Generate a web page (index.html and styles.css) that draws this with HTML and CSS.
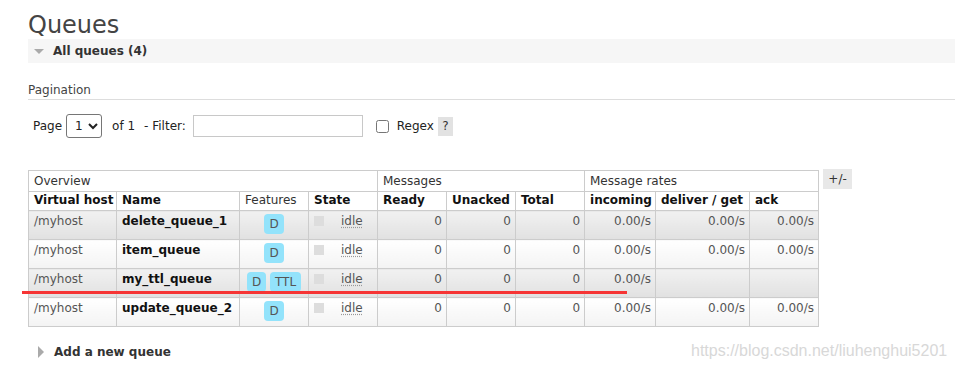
FILE: index.html
```html
<!DOCTYPE html>
<html>
<head>
<meta charset="utf-8">
<title>Queues</title>
<link rel="stylesheet" href="styles.css">
</head>
<body>
<div class="page">
  <h1 class="title">Queues</h1>
  <div class="section-head"><span class="tri-down"></span><span class="section-title">All queues (4)</span></div>
  <div class="pagination">
    <h3 class="pag-label">Pagination</h3>
    <div class="pag-row">
      <span>Page</span>
      <select class="page-select"><option>1</option></select>
      <span class="of">of 1</span>
      <span class="filter-label">- Filter:</span>
      <input class="filter" type="text">
      <input class="regex-check" type="checkbox">
      <span class="regex">Regex</span>
      <span class="help">?</span>
    </div>
  </div>
  <div class="table-wrap">
    <table class="list">
      <colgroup>
        <col class="c-vhost"><col class="c-name"><col class="c-feat"><col class="c-state">
        <col class="c-num"><col class="c-num"><col class="c-num">
        <col class="c-in"><col class="c-del"><col class="c-ack">
      </colgroup>
      <thead>
        <tr class="group">
          <th colspan="4">Overview</th>
          <th colspan="3">Messages</th>
          <th colspan="3">Message rates</th>
        </tr>
        <tr class="cols">
          <th>Virtual host</th><th>Name</th><th class="plain">Features</th><th>State</th>
          <th>Ready</th><th>Unacked</th><th>Total</th>
          <th>incoming</th><th>deliver / get</th><th>ack</th>
        </tr>
      </thead>
      <tbody>
        <tr class="alt1">
          <td class="vhost">/myhost</td><td class="name">delete_queue_1</td>
          <td class="features"><span class="badge">D</span></td>
          <td><div class="state"><span class="dot"></span><span class="idle">idle</span></div></td>
          <td class="num">0</td><td class="num">0</td><td class="num">0</td>
          <td class="num">0.00/s</td><td class="num">0.00/s</td><td class="num">0.00/s</td>
        </tr>
        <tr class="alt2">
          <td class="vhost">/myhost</td><td class="name">item_queue</td>
          <td class="features"><span class="badge">D</span></td>
          <td><div class="state"><span class="dot"></span><span class="idle">idle</span></div></td>
          <td class="num">0</td><td class="num">0</td><td class="num">0</td>
          <td class="num">0.00/s</td><td class="num">0.00/s</td><td class="num">0.00/s</td>
        </tr>
        <tr class="alt1">
          <td class="vhost">/myhost</td><td class="name">my_ttl_queue</td>
          <td class="features"><span class="badge">D</span> <span class="badge">TTL</span></td>
          <td><div class="state"><span class="dot"></span><span class="idle">idle</span></div></td>
          <td class="num">0</td><td class="num">0</td><td class="num">0</td>
          <td class="num">0.00/s</td><td class="num"></td><td class="num"></td>
        </tr>
        <tr class="alt2">
          <td class="vhost">/myhost</td><td class="name">update_queue_2</td>
          <td class="features"><span class="badge">D</span></td>
          <td><div class="state"><span class="dot"></span><span class="idle">idle</span></div></td>
          <td class="num">0</td><td class="num">0</td><td class="num">0</td>
          <td class="num">0.00/s</td><td class="num">0.00/s</td><td class="num">0.00/s</td>
        </tr>
      </tbody>
    </table>
    <span class="toggle">+/-</span>
  </div>
  <div class="add-queue"><span class="tri-right"></span><span class="add-title">Add a new queue</span></div>
  <div class="annotation"></div>
  <div class="watermark">https://blog.csdn.net/liuhenghui5201</div>
</div>
</body>
</html>
```
FILE: styles.css
```css
* { box-sizing: border-box; }
body {
  margin: 0;
  background: #fff;
  font-family: "DejaVu Sans", Verdana, sans-serif;
  font-size: 12px;
  line-height: 14px;
  color: #444;
}
.page {
  position: relative;
  padding-left: 28px;
  min-height: 366px;
  overflow: hidden;
}
.title {
  margin: 11px 0 0;
  font-size: 24px;
  line-height: 28px;
  font-weight: normal;
  color: #444;
}
.section-head {
  display: flex;
  align-items: center;
  height: 24px;
  background: #f6f6f6;
  font-weight: bold;
  color: #333;
}
.tri-down {
  margin-left: 6px;
  width: 0;
  height: 0;
  border-left: 5px solid transparent;
  border-right: 5px solid transparent;
  border-top: 5px solid #aaa;
}
.section-title { margin-left: 9px; }
.pagination { margin-top: 20px; }
.pag-label {
  margin: 0;
  font-size: 12px;
  line-height: 14px;
  font-weight: normal;
  padding-bottom: 2px;
  border-bottom: 1px solid #ddd;
  color: #444;
}
.pag-row {
  display: flex;
  align-items: center;
  height: 24px;
  margin-top: 14px;
  padding-left: 5px;
  color: #222;
}
.page-select {
  margin-left: 4px;
  width: 36px;
  height: 24px;
  padding: 0 0 0 4px;
  border: 1px solid #767676;
  border-radius: 3px;
  background: #fff;
  color: #222;
  font: 12px "DejaVu Sans", Verdana, sans-serif;
}
.of { margin-left: 10px; }
.filter-label { margin-left: 9px; }
.filter {
  margin: 0 0 0 7px;
  width: 170px;
  height: 22px;
  border: 1px solid #c8c8c8;
  padding: 0 3px;
  font: 12px "DejaVu Sans", Verdana, sans-serif;
}
.regex-check {
  margin: 0 0 0 13px;
  width: 13px;
  height: 13px;
}
.regex { margin-left: 8px; }
.help {
  margin-left: 4px;
  width: 15px;
  height: 19px;
  background: #e2e2e2;
  display: flex;
  align-items: center;
  justify-content: center;
  color: #333;
}
.table-wrap {
  display: flex;
  align-items: flex-start;
  gap: 4px;
  margin-top: 32px;
}
.list {
  border-collapse: collapse;
  table-layout: fixed;
  width: 791px;
}
.c-vhost { width: 88px; }
.c-name { width: 123px; }
.c-feat { width: 69px; }
.c-state { width: 69px; }
.c-num { width: 69px; }
.c-in { width: 71px; }
.c-del { width: 94px; }
.c-ack { width: 69px; }
.list th, .list td {
  border: 1px solid #ccc;
  text-align: left;
  vertical-align: top;
  white-space: nowrap;
  overflow: hidden;
}
.group th {
  padding: 3px 5px;
  font-weight: normal;
  color: #333;
  background: #fff;
}
.cols th {
  padding: 1px 5px 3px;
  font-weight: bold;
  color: #111;
  background: #fff;
}
.cols th.plain { font-weight: normal; color: #333; }
.list td { padding: 3px 5px 5px; }
.alt1 td { background: linear-gradient(#f1f1f1, #e1e1e1); }
.alt2 td { background: linear-gradient(#fff, #f3f3f3); }
.vhost { color: #555; }
.name { font-weight: bold; color: #111; }
.list td.num { text-align: right; color: #555; padding-right: 4px; }
.list td.features { text-align: center; }
.badge {
  display: inline-block;
  vertical-align: top;
  height: 20px;
  line-height: 20px;
  padding: 0 5px;
  border-radius: 4px;
  background: #93e3fb;
  color: #555;
}
.state {
  display: flex;
  align-items: center;
  gap: 17px;
  height: 14px;
}
.dot {
  width: 10px;
  height: 10px;
  background: #ddd;
}
.idle {
  color: #555;
  text-decoration: underline dotted #999;
  text-underline-offset: 2px;
}
.toggle {
  width: 29px;
  height: 20px;
  margin-top: -1px;
  background: #e8e8e8;
  display: flex;
  align-items: center;
  justify-content: center;
  color: #333;
}
.add-queue {
  display: flex;
  align-items: center;
  height: 14px;
  margin-top: 18px;
  font-weight: bold;
  color: #333;
}
.tri-right {
  margin-left: 10px;
  width: 0;
  height: 0;
  border-top: 6px solid transparent;
  border-bottom: 6px solid transparent;
  border-left: 6px solid #aaa;
}
.add-title { margin-left: 10px; }
.annotation {
  position: absolute;
  left: 22px;
  top: 291px;
  width: 605px;
  height: 3px;
  background: #f63535;
}
.watermark {
  position: absolute;
  left: 691px;
  top: 341px;
  font-family: "Liberation Sans", Arial, sans-serif;
  font-size: 16px;
  line-height: 20px;
  color: #d8d8d8;
  white-space: nowrap;
}
```
